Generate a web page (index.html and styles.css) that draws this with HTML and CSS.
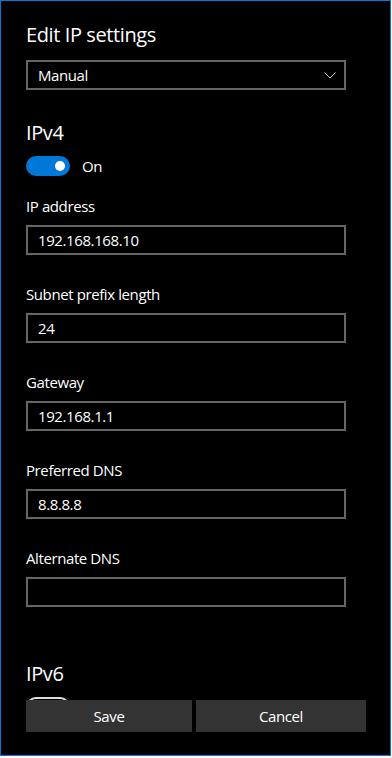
FILE: index.html
```html
<!DOCTYPE html>
<html lang="en">
<head>
    <meta charset="UTF-8">
    <meta name="viewport" content="width=device-width, initial-scale=1.0">
    <title>Edit IP settings</title>
    <link rel="stylesheet" href="styles.css">
</head>
<body>
    <div class="window">
        <div class="content">
            <h2 class="title">Edit IP settings</h2>
            <div class="select">
                <span>Manual</span>
                <svg class="chevron" width="12" height="7" viewBox="0 0 12 7">
                    <path d="M0.5 0.5 L6 6 L11.5 0.5" fill="none" stroke="#c8c8c8" stroke-width="1"/>
                </svg>
            </div>

            <h3 class="section">IPv4</h3>
            <div class="toggle-row">
                <div class="toggle on"><span class="knob"></span></div>
                <span class="toggle-label">On</span>
            </div>

            <div class="field first">
                <label for="ip">IP address</label>
                <input type="text" id="ip" value="192.168.168.10">
            </div>
            <div class="field">
                <label for="prefix">Subnet prefix length</label>
                <input type="text" id="prefix" value="24">
            </div>
            <div class="field">
                <label for="gateway">Gateway</label>
                <input type="text" id="gateway" value="192.168.1.1">
            </div>
            <div class="field">
                <label for="dns1">Preferred DNS</label>
                <input type="text" id="dns1" value="8.8.8.8">
            </div>
            <div class="field">
                <label for="dns2">Alternate DNS</label>
                <input type="text" id="dns2" value="">
            </div>

            <h3 class="section ipv6">IPv6</h3>
            <div class="toggle-row">
                <div class="toggle off"><span class="knob"></span></div>
            </div>
        </div>
        <div class="footer">
            <button class="btn save">Save</button>
            <button class="btn cancel">Cancel</button>
        </div>
    </div>
</body>
</html>
```

FILE: styles.css
```css
body {
    margin: 0;
    background-color: #fff;
    font-family: "Open Sans", "Noto Sans", sans-serif;
    letter-spacing: -0.4px;
    color: #fff;
}
.window {
    width: 391px;
    height: 756px;
    box-sizing: border-box;
    border: 1px solid #0078d7;
    background-color: #000;
    display: flex;
    flex-direction: column;
}
.content {
    flex: 1;
    overflow: hidden;
    padding: 20px 44px 0 25px;
}
.title {
    margin: 0;
    font-size: 20px;
    font-weight: 400;
    line-height: 28px;
}
.select {
    margin-top: 11px;
    height: 30px;
    box-sizing: border-box;
    border: 2px solid #666;
    padding: 0 8px 0 10px;
    display: flex;
    align-items: center;
    justify-content: space-between;
    font-size: 15px;
}
.section {
    margin: 29px 0 0;
    font-size: 20px;
    font-weight: 400;
    line-height: 28px;
}
.section.ipv6 {
    margin-top: 53px;
}
.toggle-row {
    margin-top: 9px;
    display: flex;
    align-items: center;
    gap: 12px;
    font-size: 15px;
}
.toggle {
    width: 44px;
    height: 20px;
    box-sizing: border-box;
    border-radius: 10px;
    display: flex;
    align-items: center;
}
.toggle .knob {
    width: 10px;
    height: 10px;
    border-radius: 50%;
}
.toggle.on {
    background-color: #0078d7;
    justify-content: flex-end;
    padding-right: 5px;
}
.toggle.on .knob {
    background-color: #fff;
}
.toggle.off {
    border: 2px solid #ddd;
    padding-left: 3px;
}
.toggle.off .knob {
    background-color: #ddd;
}
.field {
    margin-top: 29px;
}
.field.first {
    margin-top: 20px;
}
.field label {
    display: block;
    font-size: 15px;
    line-height: 20px;
    margin-bottom: 9px;
}
.field input {
    display: block;
    width: 100%;
    height: 30px;
    box-sizing: border-box;
    border: 2px solid #666;
    background-color: #000;
    color: #fff;
    padding: 0 10px;
    font-family: inherit;
    font-size: 15px;
    letter-spacing: inherit;
    outline: none;
}
.footer {
    display: flex;
    gap: 4px;
    padding: 0 24px 23px 25px;
}
.btn {
    height: 32px;
    border: none;
    background-color: #333;
    color: #fff;
    font-family: inherit;
    font-size: 15px;
    letter-spacing: inherit;
    padding: 0;
}
.btn.save {
    flex: 0 0 166px;
}
.btn.cancel {
    flex: 1;
}
```
